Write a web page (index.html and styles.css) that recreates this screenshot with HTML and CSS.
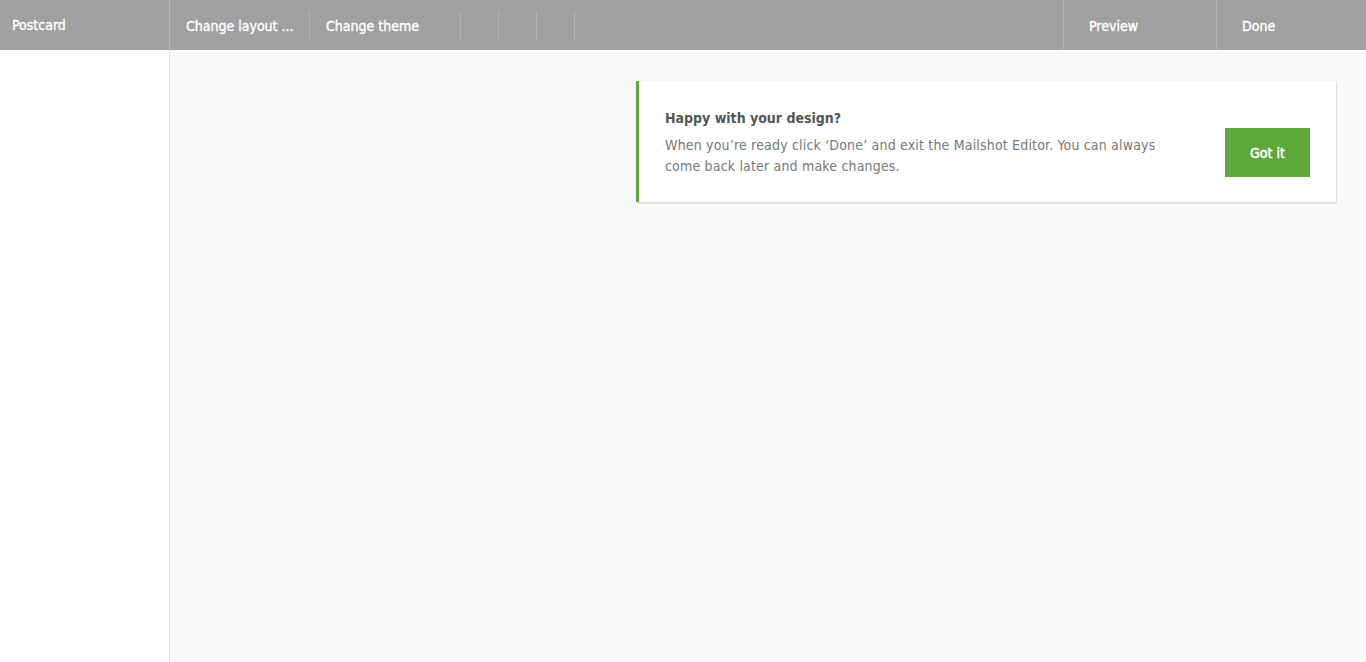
FILE: index.html
```html
<!DOCTYPE html>
<html>
<head>
<meta charset="utf-8">
<link rel="stylesheet" href="styles.css">
</head>
<body>
<header class="topbar">
  <div class="brand">Postcard</div>
  <nav class="tools">
    <div class="tool tool-layout">Change layout ...</div>
    <div class="tool tool-theme">Change theme</div>
    <div class="tool tool-empty"></div>
    <div class="tool tool-empty"></div>
    <div class="tool tool-empty"></div>
  </nav>
  <div class="spacer"></div>
  <div class="action action-preview">Preview</div>
  <div class="action action-done">Done</div>
</header>
<div class="body">
  <aside class="sidebar"></aside>
  <main class="canvas">
    <div class="notice">
      <div class="notice-text">
        <div class="notice-title">Happy with your design?</div>
        <div class="notice-desc">When you’re ready click ‘Done’ and exit the Mailshot Editor. You can always come back later and make changes.</div>
      </div>
      <button class="notice-btn">Got it</button>
    </div>
  </main>
</div>
</body>
</html>
```
FILE: styles.css
```css
* { box-sizing: border-box; }
html, body { margin: 0; padding: 0; height: 100%; }
body {
  font-family: "DejaVu Sans Condensed", "Roboto", "Liberation Sans", sans-serif;
  background: #f9f9f9;
  display: flex;
  flex-direction: column;
  overflow: hidden;
}
.topbar {
  height: 50px;
  background: #a0a0a2;
  display: flex;
  align-items: stretch;
  color: #fff;
  font-size: 14px;
  -webkit-text-stroke: 0.35px #fff;
  flex: none;
}
.brand {
  width: 170px;
  padding-left: 12px;
  display: flex;
  align-items: center;
  border-right: 1px solid #b4b4b6;
}
.tools {
  display: flex;
  align-items: center;
  padding-top: 1px;
}
.tool {
  height: 30px;
  display: flex;
  align-items: center;
  padding-left: 16px;
  border-right: 1px solid #b2b2b4;
}
.tool-layout { width: 140px; }
.tool-theme { width: 151px; }
.tool-empty { width: 38px; padding: 0; }
.spacer { flex: 1; }
.action {
  display: flex;
  align-items: center;
  padding-top: 1px;
  border-left: 1px solid #b2b2b4;
}
.action-preview { width: 153px; padding-left: 25px; }
.action-done { width: 150px; padding-left: 25px; }
.body {
  flex: 1;
  display: flex;
}
.sidebar {
  width: 170px;
  background: #fff;
  border-right: 1px solid #e2e2e2;
}
.canvas {
  flex: 1;
  display: flex;
  justify-content: flex-end;
  align-items: flex-start;
  padding: 31px 30px 0 0;
}
.notice {
  width: 700px;
  background: #fff;
  border-left: 3px solid #5ea73c;
  box-shadow: 1px 2px 0 #e0e0e0, 0 0 1px rgba(0,0,0,0.10);
  display: flex;
  align-items: flex-start;
  padding: 27px 26px 25px 26px;
}
.notice-text { flex: 1; padding-right: 40px; }
.notice-title {
  font-size: 14px;
  font-weight: bold;
  color: #555558;
  line-height: 20px;
  margin-bottom: 7px;
}
.notice-desc {
  font-size: 14px;
  letter-spacing: 0.18px;
  color: #78787a;
  line-height: 21px;
  width: 510px;
}
.notice-btn {
  margin-top: 20px;
  width: 85px;
  height: 49px;
  background: #5ea73c;
  border: none;
  color: #fff;
  font-family: inherit;
  font-size: 14px;
  -webkit-text-stroke: 0.5px #fff;
  flex: none;
  padding: 0;
}
```
